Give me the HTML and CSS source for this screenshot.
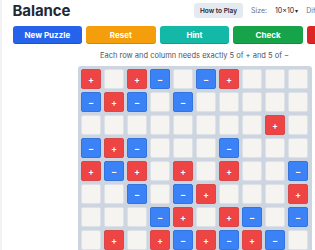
FILE: index.html
```html
<!DOCTYPE html>
<html lang="en">
<head>
    <title>Balance</title>
    <link rel="stylesheet" href="styles.css">
</head>
<body>
<div class="app">
    <header class="top">
        <h1 class="title">Balance</h1>
        <div class="controls">
            <button class="help-btn">How to Play</button>
            <label class="field">Size: <span class="select">10×10<span class="chev">&#9662;</span></span></label>
            <label class="field">Difficulty: <span class="select">Medium<span class="chev">&#9662;</span></span></label>
        </div>
    </header>
    <div class="actions">
        <button class="btn btn-new">New Puzzle</button>
        <button class="btn btn-reset">Reset</button>
        <button class="btn btn-hint">Hint</button>
        <button class="btn btn-check">Check</button>
        <button class="btn btn-solve">Solve</button>
    </div>
    <p class="rule">Each row and column needs exactly 5 of + and 5 of −</p>
    <div class="board-wrap">
        <div id="board" class="board"></div>
    </div>
</div>
<script>
  let rows = [
    'p.pm.mp...',
    'mpm.m.....',
    '........p.',
    'mpm...m...',
    'pmp.p.p..m',
    '..m.mp...p',
    '...mp.pm.m',
    '.p.pmpmpm.',
    'p.m..p.m.p',
    '.m.p..p.m.'
  ];
  let board = document.getElementById('board');
  for (const row of rows) {
    for (const ch of row) {
      let cell = document.createElement('div');
      cell.className = 'cell';
      if (ch === 'p') {
        cell.classList.add('plus');
        cell.textContent = '+';
      } else if (ch === 'm') {
        cell.classList.add('minus');
        cell.textContent = '−';
      }
      board.appendChild(cell);
    }
  }
</script>
</body>
</html>
```

FILE: styles.css
```css
body {
    margin: 0;
    background: #f1f2f4;
    font-family: Inter, "Liberation Sans", sans-serif;
    color: #1f2937;
}

.app {
    background: #fff;
    margin-left: 2px;
    width: 364px;
    padding: 0 10.5px 20px;
}

.top {
    display: flex;
    justify-content: space-between;
    align-items: center;
    height: 21px;
    padding-top: 0;
}

.title {
    margin: 0;
    font-size: 15px;
    font-weight: 700;
    letter-spacing: -0.1px;
}

.controls {
    display: flex;
    align-items: center;
    gap: 8px;
    white-space: nowrap;
}

.help-btn {
    background: #e5e9f0;
    border: none;
    border-radius: 3px;
    height: 15px;
    padding: 0 6px;
    font-family: inherit;
    font-size: 6.5px;
    font-weight: 600;
    color: #1f2937;
}

.field {
    font-size: 7px;
    color: #6b7280;
}

.select {
    color: #1f2937;
    margin-left: 6px;
}

.chev {
    font-size: 6px;
    margin-left: 1px;
}

.actions {
    display: grid;
    grid-template-columns: repeat(5, 1fr);
    gap: 4px;
    margin-top: 5px;
}

.btn {
    height: 17.5px;
    border: none;
    border-radius: 3px;
    color: #fff;
    font-family: inherit;
    font-size: 8px;
    font-weight: 700;
    box-shadow: inset 0 -1px 0 rgba(0, 0, 0, 0.15);
}

.btn-new { background: #2563eb; }
.btn-reset { background: #f59e0b; }
.btn-hint { background: #14b8a6; }
.btn-check { background: #16a34a; }
.btn-solve { background: #dc2626; }

.rule {
    margin: 7px 0 0;
    text-align: center;
    font-size: 7.5px;
    color: #4b5563;
}

.board-wrap {
    display: flex;
    justify-content: center;
    margin-top: 6px;
}

.board {
    display: grid;
    grid-template-columns: repeat(10, 20px);
    grid-auto-rows: 20px;
    gap: 3px;
    padding: 3.5px;
    background: #ccd5e0;
    border-radius: 3px;
}

.cell {
    box-sizing: border-box;
    background: #f5f4f1;
    border: 1px solid #dde2e8;
    border-radius: 2px;
    display: flex;
    align-items: center;
    justify-content: center;
    color: #fff;
    font-size: 9px;
    font-weight: 700;
    text-shadow: 0 0 1px rgba(0, 0, 0, 0.3);
}

.cell.plus {
    background: #ef4444;
    border-color: #d94848;
}

.cell.minus {
    background: #3b82f6;
    border-color: #3574dc;
}
```
